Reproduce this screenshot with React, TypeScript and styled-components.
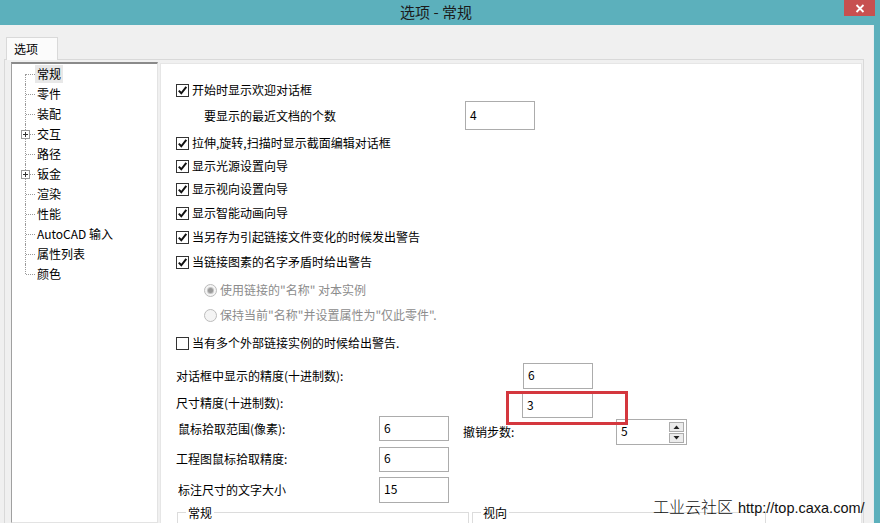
import React from 'react';
import styled, { createGlobalStyle } from 'styled-components';

const Global = createGlobalStyle`
  html, body { margin: 0; padding: 0; }
  body {
    width: 880px; height: 523px; overflow: hidden;
    background: #5cb0bc;
    font-family: "Noto Sans CJK SC", "Noto Sans", sans-serif;
  }
  * { box-sizing: border-box; }
`;

const Window = styled.div`
  position: relative;
  width: 880px;
  height: 523px;
  overflow: hidden;
  background: #5cb0bc;
  display: flex;
  flex-direction: column;
`;

const TitleBar = styled.div`
  height: 25px;
  flex: none;
  display: flex;
  align-items: flex-start;
  padding-left: 28px;
`;

const TitleText = styled.div`
  flex: 1;
  text-align: center;
  font-size: 15px;
  line-height: 23px;
  color: #1b1b1b;
`;

const CloseButton = styled.div`
  width: 31px;
  height: 16px;
  margin-right: 5px;
  background: #c75050;
  display: flex;
  align-items: center;
  justify-content: center;
`;

const Body = styled.div`
  flex: 1;
  width: 874px;
  background: #f0f0f0;
  border-right: 1px solid #e6eef0;
  padding-top: 12px;
  display: flex;
  flex-direction: column;
  min-height: 0;
`;

const TabStrip = styled.div`
  display: flex;
  padding-left: 6px;
  height: 22px;
  flex: none;
`;

const Tab = styled.div`
  position: relative;
  z-index: 1;
  width: 52px;
  height: 23px;
  border: 1px solid #d9d9d9;
  border-bottom: none;
  background: #fbfbfb;
  font-size: 12px;
  line-height: 21px;
  padding-left: 7px;
  color: #000;
`;

const TabPage = styled.div`
  flex: 1;
  margin-left: 4px;
  width: 860px;
  border: 1px solid #d9d9d9;
  border-bottom: none;
  background: #f0f0f0;
  padding: 2px 0 0 6px;
  display: flex;
  gap: 2px;
  min-height: 0;
`;

const Tree = styled.div`
  width: 147px;
  flex: none;
  background: #fff;
  border-style: solid;
  border-width: 2px 1px 1px 1px;
  border-color: #8a8a8a #e3e3e3 #e3e3e3 #a0a0a0;
  display: flex;
  flex-direction: column;
`;

const TreeItem = styled.div`
  height: 20px;
  display: flex;
  align-items: center;
  flex: none;
`;

const Connector = styled.div<{ $pos: 'first' | 'mid' | 'last' }>`
  position: relative;
  width: 23px;
  height: 20px;
  flex: none;
  &::before {
    content: '';
    position: absolute;
    left: 13px;
    top: ${p => (p.$pos === 'first' ? '10px' : '0')};
    bottom: ${p => (p.$pos === 'last' ? '10px' : '0')};
    border-left: 1px dotted #9a9a9a;
  }
  &::after {
    content: '';
    position: absolute;
    left: 14px;
    width: 9px;
    top: 10px;
    border-top: 1px dotted #9a9a9a;
  }
`;

const PlusBox = styled.div`
  position: absolute;
  z-index: 1;
  left: 9px;
  top: 6px;
  width: 9px;
  height: 9px;
  border: 1px solid #9a9a9a;
  background: #fff;
  &::before {
    content: '';
    position: absolute;
    left: 1px;
    top: 3px;
    width: 5px;
    height: 1px;
    background: #333;
  }
  &::after {
    content: '';
    position: absolute;
    left: 3px;
    top: 1px;
    width: 1px;
    height: 5px;
    background: #333;
  }
`;

const TreeLabel = styled.div<{ $selected?: boolean }>`
  font-size: 12px;
  line-height: 18px;
  padding: 0 2px;
  color: #000;
  background: ${p => (p.$selected ? '#e8e8e8' : 'transparent')};
  white-space: nowrap;
`;

const Panel = styled.div`
  position: relative;
  width: 702px;
  flex: none;
  margin-top: 1px;
  background: #fff;
  border: 1px solid #e6e6e6;
  border-bottom: none;
  padding: 16px 0 0 15px;
  display: flex;
  flex-direction: column;
`;

const Row = styled.div<{ $h: number; $pl?: number }>`
  height: ${p => p.$h}px;
  flex: none;
  display: flex;
  align-items: center;
  padding-left: ${p => p.$pl ?? 0}px;
`;

const Text = styled.span<{ $w?: number; $disabled?: boolean }>`
  font-size: 12px;
  line-height: 16px;
  color: ${p => (p.$disabled ? '#8c8c8c' : '#000')};
  white-space: nowrap;
  flex: none;
  ${p => (p.$w ? `width: ${p.$w}px;` : '')}
`;

const CheckBox = styled.span`
  width: 13px;
  height: 13px;
  flex: none;
  border: 1px solid #333;
  background: #fff;
  margin-right: 3px;
  display: flex;
  align-items: center;
  justify-content: center;
`;

const Radio = styled.span<{ $on?: boolean }>`
  width: 13px;
  height: 13px;
  flex: none;
  border-radius: 50%;
  border: 1px solid #bcbcbc;
  background: #f4f4f4;
  margin-right: 3px;
  display: flex;
  align-items: center;
  justify-content: center;
  &::after {
    content: '';
    width: 5px;
    height: 5px;
    border-radius: 50%;
    background: ${p => (p.$on ? '#9a9a9a' : 'transparent')};
    box-shadow: ${p => (p.$on ? '0 0 0 1px #c4c4c4' : 'none')};
  }
`;

const Edit = styled.div<{ $w: number; $h: number; $mt?: number; $ml?: number }>`
  width: ${p => p.$w}px;
  height: ${p => p.$h}px;
  flex: none;
  margin-top: ${p => p.$mt ?? 0}px;
  margin-left: ${p => p.$ml ?? 0}px;
  border: 1px solid #acacac;
  background: #fff;
  padding-left: 4px;
  padding-right: 2px;
  display: flex;
  align-items: center;
  font-size: 12px;
  color: #000;
`;

const EditValue = styled.span`
  flex: 1;
  line-height: 16px;
  padding-bottom: 2px;
`;

const SpinCol = styled.div`
  width: 15px;
  height: 21px;
  display: flex;
  flex-direction: column;
  gap: 1px;
`;

const SpinBtn = styled.div`
  flex: 1;
  border: 1px solid #acacac;
  background: #ececec;
  display: flex;
  align-items: center;
  justify-content: center;
`;

const RightGroup = styled.div`
  display: flex;
  align-items: center;
  margin-top: 7px;
  margin-left: 14px;
`;

const Groups = styled.div`
  display: flex;
  gap: 3px;
  margin-top: 1px;
  padding-left: 1px;
`;

const GroupBox = styled.fieldset<{ $w: number }>`
  width: ${p => p.$w}px;
  height: 60px;
  margin: 0;
  padding: 0 8px;
  border: 1px solid #dcdcdc;
  border-bottom: none;
`;

const Legend = styled.legend`
  font-size: 12px;
  line-height: 17px;
  padding: 0 2px;
  color: #000;
`;

const Highlight = styled.div`
  position: absolute;
  left: 345px;
  top: 327px;
  width: 122px;
  height: 34px;
  border: 3px solid #d4373e;
  pointer-events: none;
`;

const Watermark = styled.div`
  position: absolute;
  left: 653px;
  top: 495px;
  display: flex;
  align-items: baseline;
  gap: 5px;
  color: #111;
  white-space: nowrap;
`;

const WatermarkCJK = styled.span`
  font-size: 16px;
  line-height: 22px;
  font-weight: 300;
`;

const WatermarkUrl = styled.span`
  font-family: "Liberation Sans", Arial, sans-serif;
  font-size: 14.5px;
  line-height: 22px;
`;

const Check = () => (
  <svg width="11" height="11" viewBox="0 0 11 11">
    <path d="M1.8 5.6 L4.3 8.3 L9.3 1.9" fill="none" stroke="#111" strokeWidth="2" />
  </svg>
);

const Tri = ({ up }: { up?: boolean }) => (
  <svg width="7" height="4" viewBox="0 0 7 4">
    <path d={up ? 'M0.5 4 L3.5 0.5 L6.5 4 Z' : 'M0.5 0 L3.5 3.5 L6.5 0 Z'} fill="#222" />
  </svg>
);

const treeItems: { label: string; plus?: boolean; selected?: boolean }[] = [
  { label: '常规', selected: true },
  { label: '零件' },
  { label: '装配' },
  { label: '交互', plus: true },
  { label: '路径' },
  { label: '钣金', plus: true },
  { label: '渲染' },
  { label: '性能' },
  { label: 'AutoCAD 输入' },
  { label: '属性列表' },
  { label: '颜色' },
];

const CheckRow = ({ h, label, checked = true }: { h: number; label: string; checked?: boolean }) => (
  <Row $h={h}>
    <CheckBox>{checked && <Check />}</CheckBox>
    <Text>{label}</Text>
  </Row>
);

export default function App() {
  return (
    <>
      <Global />
      <Window>
        <TitleBar>
          <TitleText>选项 - 常规</TitleText>
          <CloseButton>
            <svg width="10" height="9" viewBox="0 0 10 9">
              <path d="M1.5 1 L8.5 8 M8.5 1 L1.5 8" stroke="#fff" strokeWidth="1.8" />
            </svg>
          </CloseButton>
        </TitleBar>
        <Body>
          <TabStrip>
            <Tab>选项</Tab>
          </TabStrip>
          <TabPage>
            <Tree>
              {treeItems.map((it, i) => (
                <TreeItem key={it.label}>
                  <Connector $pos={i === 0 ? 'first' : i === treeItems.length - 1 ? 'last' : 'mid'}>
                    {it.plus && <PlusBox />}
                  </Connector>
                  <TreeLabel $selected={it.selected}>{it.label}</TreeLabel>
                </TreeItem>
              ))}
            </Tree>
            <Panel>
              <CheckRow h={20} label="开始时显示欢迎对话框" />
              <Row $h={31} $pl={28}>
                <Text $w={261}>要显示的最近文档的个数</Text>
                <Edit $w={70} $h={29}>
                  <EditValue>4</EditValue>
                </Edit>
              </Row>
              <CheckRow h={24} label="拉伸,旋转,扫描时显示截面编辑对话框" />
              <CheckRow h={22} label="显示光源设置向导" />
              <CheckRow h={24} label="显示视向设置向导" />
              <CheckRow h={24} label="显示智能动画向导" />
              <CheckRow h={24} label="当另存为引起链接文件变化的时候发出警告" />
              <CheckRow h={26} label="当链接图素的名字矛盾时给出警告" />
              <Row $h={30} $pl={28}>
                <Radio $on />
                <Text $disabled>使用链接的"名称" 对本实例</Text>
              </Row>
              <Row $h={20} $pl={28}>
                <Radio />
                <Text $disabled>保持当前"名称"并设置属性为"仅此零件".</Text>
              </Row>
              <CheckRow h={36} label="当有多个外部链接实例的时候给出警告." checked={false} />
              <Row $h={30}>
                <Text $w={347}>对话框中显示的精度(十进制数):</Text>
                <Edit $w={70} $h={26}>
                  <EditValue>6</EditValue>
                </Edit>
              </Row>
              <Row $h={24}>
                <Text $w={346}>尺寸精度(十进制数):</Text>
                <Edit $w={71} $h={25} $mt={5}>
                  <EditValue>3</EditValue>
                </Edit>
              </Row>
              <Row $h={27} $pl={2}>
                <Text $w={201}>鼠标拾取范围(像素):</Text>
                <Edit $w={70} $h={25}>
                  <EditValue>6</EditValue>
                </Edit>
                <RightGroup>
                  <Text $w={153}>撤销步数:</Text>
                  <Edit $w={71} $h={26}>
                    <EditValue>5</EditValue>
                    <SpinCol>
                      <SpinBtn>
                        <Tri up />
                      </SpinBtn>
                      <SpinBtn>
                        <Tri />
                      </SpinBtn>
                    </SpinCol>
                  </Edit>
                </RightGroup>
              </Row>
              <Row $h={34}>
                <Text $w={203}>工程图鼠标拾取精度:</Text>
                <Edit $w={70} $h={25}>
                  <EditValue>6</EditValue>
                </Edit>
              </Row>
              <Row $h={27} $pl={2}>
                <Text $w={201}>标注尺寸的文字大小</Text>
                <Edit $w={70} $h={26}>
                  <EditValue>15</EditValue>
                </Edit>
              </Row>
              <Groups>
                <GroupBox $w={292}>
                  <Legend>常规</Legend>
                </GroupBox>
                <GroupBox $w={294}>
                  <Legend>视向</Legend>
                </GroupBox>
              </Groups>
              <Highlight />
            </Panel>
          </TabPage>
        </Body>
        <Watermark>
          <WatermarkCJK>工业云社区</WatermarkCJK>
          <WatermarkUrl>http://top.caxa.com/</WatermarkUrl>
        </Watermark>
      </Window>
    </>
  );
}
